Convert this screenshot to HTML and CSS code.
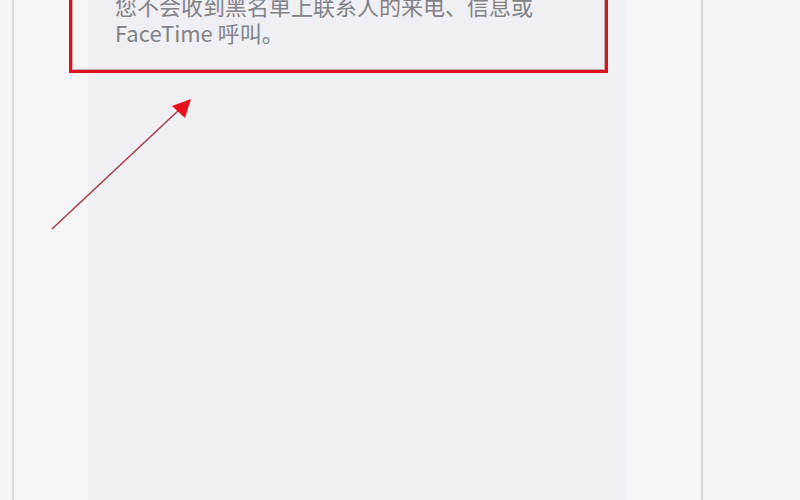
FILE: index.html
```html
<!DOCTYPE html>
<html>
    <head>
    <title>阻止的联系人</title>
    <link rel="stylesheet" href="styles.css">
    </head>
    <body>
    <div id="device">
        <div id="panel">
            <div class="note">
                <p class="footer">您不会收到黑名单上联系人的来电、信息或FaceTime 呼叫。</p>
            </div>
        </div>
        <!-- hand-drawn pointer up to the note -->
        <svg class="pointer" width="200" height="240" viewBox="0 0 200 240">
            <line x1="52" y1="229" x2="180" y2="109" stroke="#a8404e" stroke-width="1.6"/>
            <polygon points="191,99 185,118 172,106" fill="#e8101c"/>
        </svg>
    </div>
    </body>
</html>
```
FILE: styles.css
```css
html, body {
    margin: 0;
    height: 100%;
    overflow: hidden;
}
body {
    background-color: #f4f4f4;
    font-family: "Noto Sans CJK SC", "Noto Sans", sans-serif;
}
#device {
    position: relative;
    margin-left: 12px;
    width: 687px;
    height: 500px;
    background-color: #f6f6f6;
    border-left: 2px solid #d8d8d8;
    border-right: 2px solid #d6d6d6;
}
#panel {
    display: flow-root;
    margin-left: 74px;
    width: 539px;
    height: 500px;
    background-color: #efeff4;
}
.note {
    margin: -40px 19px 0 -19px;
    padding: 29px 0 24px 43px;
    border: 3px solid #d8141f;
    box-shadow: inset 0 0 0 1px rgba(150, 20, 30, .35);
}
.footer {
    margin: 0;
    width: 430px;
    font-size: 22px;
    line-height: 27px;
    color: #828287;
}
.pointer {
    position: absolute;
    left: -14px;
    top: 0;
}
```
